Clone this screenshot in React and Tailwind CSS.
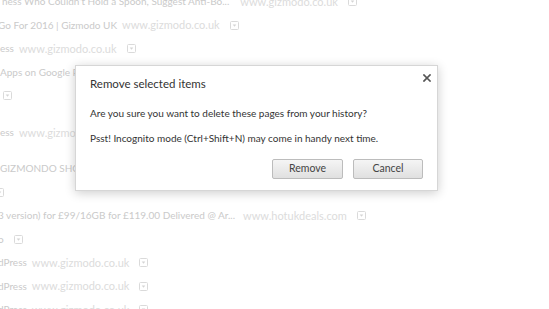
import React from 'react';

const rows = [
  { title: 'ness Who Couldn’t Hold a Spoon, Suggest Anti-Bo...', url: 'www.gizmodo.co.uk', gapUrl: 'ml-[11px]', shift: 'ml-[2px]' },
  { title: 'Go For 2016 | Gizmodo UK', url: 'www.gizmodo.co.uk', shift: '-ml-[2px]' },
  { title: 'ess', url: 'www.gizmodo.co.uk' },
  { title: 'Apps on Google Play', url: 'play.google.com' },
  { title: '', url: '', shift: 'ml-[3px]' },
  { title: 'ess', url: 'www.gizmodo.co.uk', gap: 'mt-[13.5px]' },
  { title: 'GIZMONDO SHOP', url: 'www.gizmodo.co.uk', gap: 'mt-[12.5px]' },
  { title: '', url: '', shift: '-ml-[5px]' },
  { title: '3 version) for £99/16GB for £119.00 Delivered @ Ar...', url: 'www.hotukdeals.com', gapUrl: 'ml-[8px]', shift: '-ml-[2px]' },
  { title: 'o', url: '', shift: '-ml-[2px]' },
  { title: 'dPress', url: 'www.gizmodo.co.uk', shift: '-ml-[2px]' },
  { title: 'dPress', url: 'www.gizmodo.co.uk', shift: '-ml-[2px]' },
  { title: 'dPress', url: 'www.gizmodo.co.uk', shift: '-ml-[2px]' },
];

const MenuIcon = () => (
  <svg width="9" height="9" viewBox="0 0 9 9" className="shrink-0 block">
    <rect x="0.5" y="0.5" width="8" height="8" rx="1" fill="none" stroke="#dadada" />
    <path d="M2.7 3.6 L6.3 3.6 L4.5 5.8 Z" fill="#d4d4d4" />
  </svg>
);

const HistoryRow = ({ row }) => (
  <div className={`flex items-center h-[23.5px] whitespace-nowrap ${row.gap || ''} ${row.shift || ''}`}>
    {row.title && <span className="text-[10px] text-[#cacaca]">{row.title}</span>}
    {row.url && <span className={`${row.gapUrl || 'ml-[5px]'} text-[11px] text-[#dcdcdc]`}>{row.url}</span>}
    <span className={row.title || row.url ? 'ml-[10px]' : ''}>
      <MenuIcon />
    </span>
  </div>
);

export default function App() {
  return (
    <div
      className="relative w-[549px] h-[309px] overflow-hidden bg-white"
      style={{ fontFamily: 'Lato, "Open Sans", sans-serif' }}
    >
      <div className="flex flex-col -mt-[10px]">
        {rows.map((row, i) => (
          <HistoryRow key={i} row={row} />
        ))}
      </div>

      <div className="absolute left-[75px] top-[65px] w-[363px] h-[126px] bg-white border border-[#d6d6d6] shadow-[0_2px_10px_rgba(0,0,0,0.2)] flex flex-col pl-[14px] pr-[14px] pt-[10px] pb-[11px] whitespace-nowrap">
        <button className="absolute right-[4px] top-[6px] w-[12px] h-[12px] flex items-center justify-center">
          <svg width="8" height="8" viewBox="0 0 8 8">
            <path d="M1 1 L7 7 M7 1 L1 7" stroke="#555" strokeWidth="1.7" strokeLinecap="square" />
          </svg>
        </button>
        <div className="text-[11.5px] leading-[16px] text-[#333]">Remove selected items</div>
        <div className="mt-[13px] text-[10px] leading-[16px] text-[#333]">
          Are you sure you want to delete these pages from your history?
        </div>
        <div className="mt-[9px] text-[10px] leading-[16px] text-[#333]">
          Psst! Incognito mode (Ctrl+Shift+N) may come in handy next time.
        </div>
        <div className="mt-auto flex justify-end gap-[10px]">
          <button className="w-[71px] h-[20px] rounded-[2px] border border-[#bcbcbc] bg-gradient-to-b from-[#f5f5f5] to-[#e0e0e0] text-[10.5px] text-[#444]">
            Remove
          </button>
          <button className="w-[70px] h-[20px] rounded-[2px] border border-[#bcbcbc] bg-gradient-to-b from-[#f5f5f5] to-[#e0e0e0] text-[10.5px] text-[#444]">
            Cancel
          </button>
        </div>
      </div>
    </div>
  );
}
